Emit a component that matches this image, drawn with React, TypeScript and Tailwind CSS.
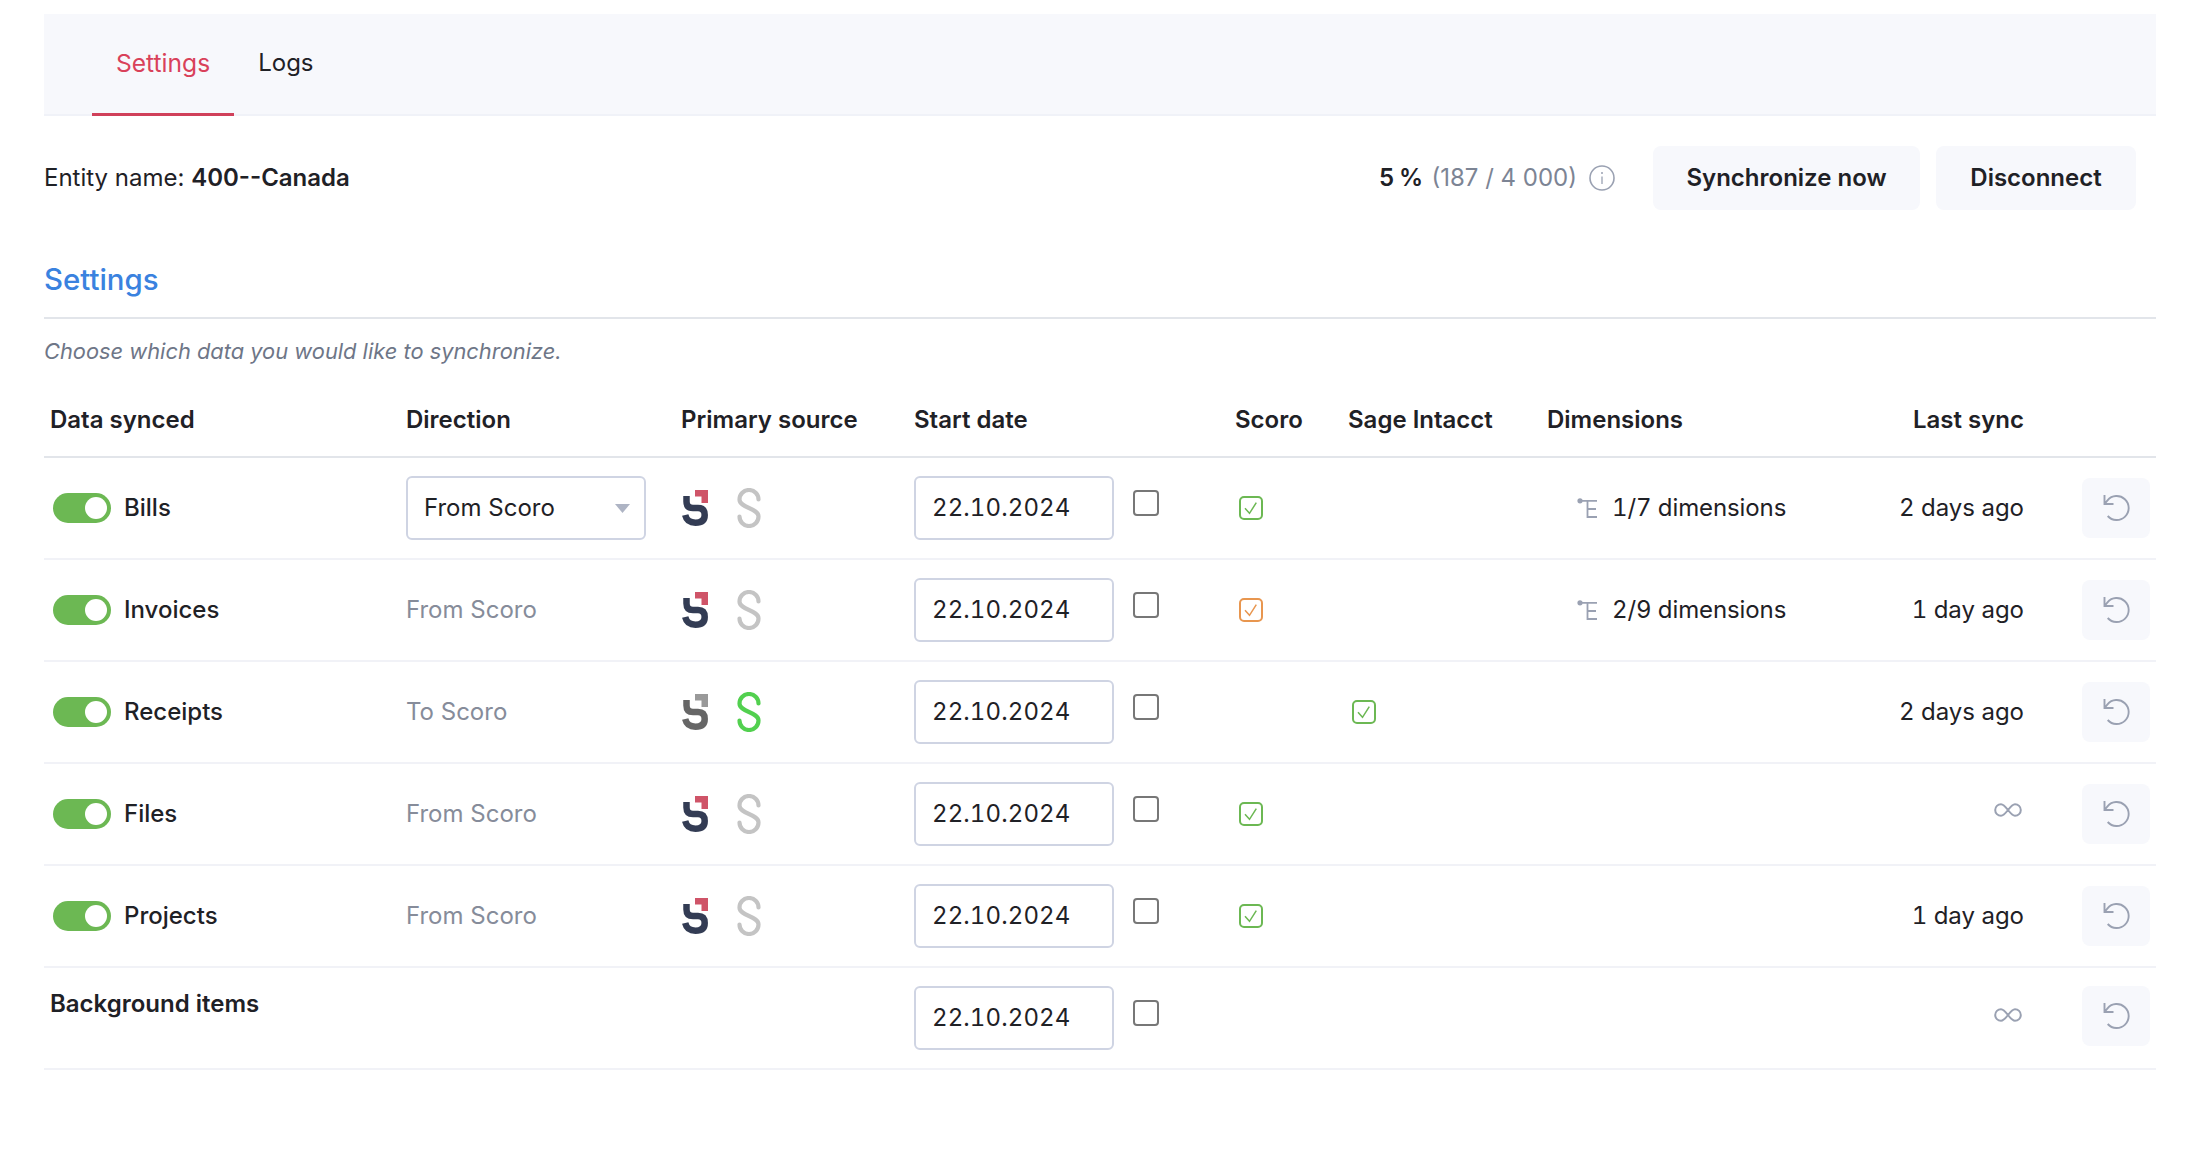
const ScoroLogo = ({ muted }: { muted?: boolean }) => (
  <svg width="26" height="36" viewBox="0 0 26 36" fill="none">
    <path d="M13 0H26V13H19.5V6.5H13Z" fill={muted ? "#999999" : "#cf5468"} />
    <path d="M4.5 6V11.5Q4.5 18 11 18H16Q22.7 18 22.7 25Q22.7 32.7 13.5 32.7Q5 32.7 3.2 25" stroke={muted ? "#666666" : "#333c54"} strokeWidth="6.5" />
  </svg>
);

const SageLogo = ({ active }: { active?: boolean }) => (
  <svg width="24" height="40" viewBox="0 0 24 40" fill="none">
    <path d="M21.5 11.5A9.5 9.5 0 0 0 2.5 11.5C2.5 20 21.5 20 21.5 28.5A9.5 9.5 0 0 1 2.5 28.5" stroke={active ? "#52d04f" : "#c4c4c4"} strokeWidth="4.2" strokeLinecap="round" />
  </svg>
);

const CheckMark = ({ color }: { color: string }) => (
  <svg width="24" height="24" viewBox="0 0 24 24" fill="none">
    <rect x="1" y="1" width="22" height="22" rx="4" stroke={color} strokeWidth="2" />
    <path d="M6 12.3L10.5 17.3L17.3 6.7" stroke={color} strokeWidth="1.5" />
  </svg>
);

const DimIcon = () => (
  <svg width="20" height="20" viewBox="0 0 20 20" fill="none">
    <circle cx="3" cy="2.8" r="2.6" fill="#9aa1b2" />
    <path d="M3 2.8H20M10.5 2.8V19H20M10.5 11H19" stroke="#9aa1b2" strokeWidth="1.8" />
  </svg>
);

const InfinityIcon = () => (
  <svg width="28" height="14" viewBox="0 0 28 14" fill="none">
    <path d="M7 1.2C3.8 1.2 1.2 3.7 1.2 7S3.8 12.8 7 12.8C12 12.8 16 1.2 21 1.2C24.2 1.2 26.8 3.7 26.8 7S24.2 12.8 21 12.8C16 12.8 12 1.2 7 1.2Z" stroke="#9aa1b2" strokeWidth="2" />
  </svg>
);

const InfoIcon = () => (
  <svg width="26" height="26" viewBox="0 0 26 26" fill="none">
    <circle cx="13" cy="13" r="12" stroke="#9aa1b2" strokeWidth="1.6" />
    <circle cx="13" cy="8" r="1" fill="#9aa1b2" />
    <path d="M13 11.5V19" stroke="#9aa1b2" strokeWidth="1.3" />
  </svg>
);

const ResetIcon = () => (
  <svg width="28" height="28" viewBox="0 0 28 28" fill="none">
    <path d="M2.5 1V10H11.5M2.5 10L5.5 6.3A12 12 0 1 1 5.7 22" stroke="#9aa1b2" strokeWidth="1.9" />
  </svg>
);

const Toggle = () => (
  <div className="flex h-[30px] w-[58px] shrink-0 items-center justify-end rounded-full bg-[#6cb853] pr-[4px]">
    <div className="h-[22px] w-[22px] rounded-full bg-white" />
  </div>
);

type Row = {
  name?: string;
  label?: string;
  dir?: string;
  select?: boolean;
  toSage?: boolean;
  scoro?: string;
  sage?: boolean;
  dims?: string;
  last?: string;
  inf?: boolean;
};

const rows: Row[] = [
  { name: "Bills", select: true, dir: "From Scoro", scoro: "#6cb853", dims: "1/7 dimensions", last: "2 days ago" },
  { name: "Invoices", dir: "From Scoro", scoro: "#e8964f", dims: "2/9 dimensions", last: "1 day ago" },
  { name: "Receipts", dir: "To Scoro", toSage: true, sage: true, last: "2 days ago" },
  { name: "Files", dir: "From Scoro", scoro: "#6cb853", inf: true },
  { name: "Projects", dir: "From Scoro", scoro: "#6cb853", last: "1 day ago" },
  { label: "Background items", inf: true },
];

const cols = "grid grid-cols-[362px_275px_233px_321px_113px_199px_273px_204px_1fr]";

export default function App() {
  return (
    <div className="min-h-[1162px] bg-white pt-[14px] pr-[42px] pl-[44px] font-['Inter',sans-serif] text-[24px] text-[#1f2126]">
      <div className="flex h-[102px] items-stretch border-b-2 border-[#f0f2f8] bg-[#f7f8fc] pl-[48px] text-[24.6px]">
        <div className="-mb-[2px] flex items-center border-b-[3px] border-[#d0405a] px-[24px] pb-[1px] text-[#d9415a]">Settings</div>
        <div className="flex items-center px-[24px] pb-[2px] text-[24px]">Logs</div>
      </div>

      <div className="mt-[30px] mr-[20px] flex h-[64px] items-center justify-between">
        <div>
          Entity name: <span className="font-semibold">400--Canada</span>
        </div>
        <div className="flex items-center">
          <span className="font-semibold tracking-[-0.6px]">5 %</span>
          <span className="ml-[9px] text-[#7c8494]">(187 / 4 000)</span>
          <span className="mr-[38px] ml-[12px] flex">
            <InfoIcon />
          </span>
          <button className="h-[64px] w-[267px] rounded-[8px] bg-[#f7f8fc] font-semibold">Synchronize now</button>
          <button className="ml-[16px] h-[64px] w-[200px] rounded-[8px] bg-[#f7f8fc] font-semibold">Disconnect</button>
        </div>
      </div>

      <div className="mt-[49px] border-b-2 border-[#e2e5ea] pb-[16px] text-[29.4px] leading-[42px] font-medium text-[#3a82df]">Settings</div>
      <div className="mt-[16px] text-[21.85px] leading-[32px] text-[#6e7687] italic">Choose which data you would like to synchronize.</div>

      <div className={`${cols} mt-[17px] h-[74px] items-center border-b-2 border-[#e2e5ea] font-semibold`}>
        <div className="pl-[6px]">Data synced</div>
        <div>Direction</div>
        <div>Primary source</div>
        <div>Start date</div>
        <div>Scoro</div>
        <div>Sage Intacct</div>
        <div>Dimensions</div>
        <div className="text-right">Last sync</div>
        <div />
      </div>

      {rows.map((r, i) => (
        <div key={i} className={`${cols} h-[102px] items-center border-b-2 border-[#f1f2f7]`}>
          <div className="flex items-center">
            {r.name ? (
              <div className="ml-[9px] flex items-center gap-[13px] font-medium">
                <Toggle />
                {r.name}
              </div>
            ) : (
              <div className="mb-[28px] pl-[6px] font-semibold">{r.label}</div>
            )}
          </div>
          <div>
            {r.select ? (
              <div className="flex h-[64px] w-[240px] items-center justify-between rounded-[6px] border-2 border-[#cfd4e3] pr-[14px] pl-[16px]">
                From Scoro
                <svg width="15" height="9" viewBox="0 0 15 9">
                  <path d="M0 0H15L7.5 9Z" fill="#aeb4c4" />
                </svg>
              </div>
            ) : (
              r.dir && <span className="text-[#868c9a]">{r.dir}</span>
            )}
          </div>
          <div className="flex items-center">
            {r.dir && (
              <>
                <span className="ml-[1px] flex">
                  <ScoroLogo muted={r.toSage} />
                </span>
                <span className="ml-[29px] flex">
                  <SageLogo active={r.toSage} />
                </span>
              </>
            )}
          </div>
          <div className="flex items-center gap-[19px]">
            <div className="flex h-[64px] w-[200px] items-center rounded-[6px] border-2 border-[#cfd4e3] pl-[16px] tracking-[0.1px] tabular-nums">22.10.2024</div>
            <div className="mb-[10px] h-[26px] w-[26px] rounded-[4px] border-2 border-[#777777]" />
          </div>
          <div className="flex pl-[4px]">{r.scoro && <CheckMark color={r.scoro} />}</div>
          <div className="flex pl-[4px]">{r.sage && <CheckMark color="#6cb853" />}</div>
          <div className="flex items-center gap-[15px] pl-[30px] tabular-nums">
            {r.dims && (
              <>
                <DimIcon />
                <span className="tracking-[-0.1px]">{r.dims}</span>
              </>
            )}
          </div>
          <div className="flex justify-end tabular-nums">
            {r.last}
            {r.inf && (
              <span className={`flex pr-[2px] ${i === 5 ? "mb-[6px]" : "mb-[8px]"}`}>
                <InfinityIcon />
              </span>
            )}
          </div>
          <div className={`flex justify-end pr-[6px] ${i === 5 ? "mb-[4px]" : ""}`}>
            <div className="flex h-[60px] w-[68px] items-center justify-center rounded-[8px] bg-[#f7f8fc]">
              <ResetIcon />
            </div>
          </div>
        </div>
      ))}
    </div>
  );
}
